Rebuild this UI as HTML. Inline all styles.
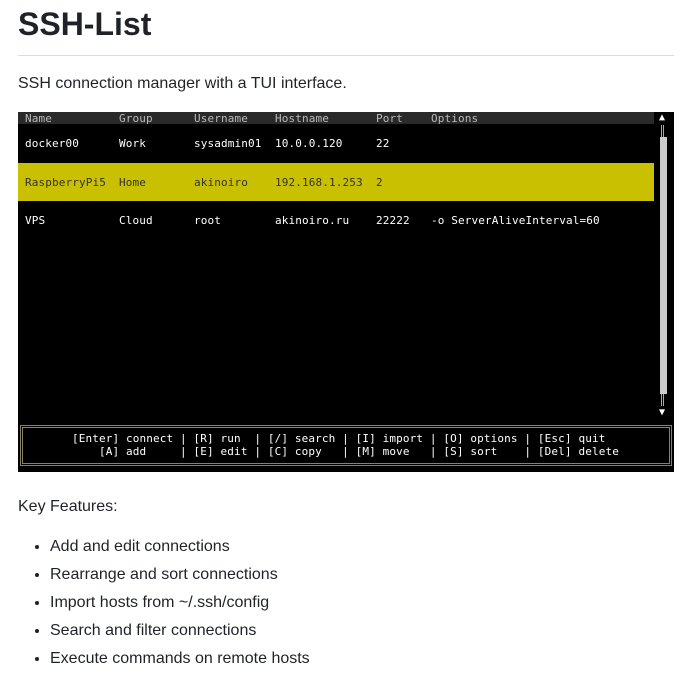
<!DOCTYPE html>
<html><head><style>
body{margin:0;background:#fff;font-family:"Liberation Sans",sans-serif;color:#1f2328;}
h1{position:absolute;left:18px;top:6px;margin:0;font-size:32px;font-weight:bold;}
.hr{position:absolute;left:18px;top:55px;width:656px;height:1px;background:#d8dee4;}
.p{position:absolute;left:18px;font-size:16px;}
.term{position:absolute;left:18px;top:112px;width:656px;height:360px;background:#000;font-family:"DejaVu Sans Mono",monospace;font-size:11px;}
.t{position:absolute;white-space:pre;color:#fff;letter-spacing:0.13px;}
.h{color:#bbb;top:0px}
.r1{top:25px}.r2{top:64px;color:#333}.r3{top:102px}
ul{position:absolute;left:18px;top:533px;margin:0;padding-left:32px;font-size:16px;}
li{height:28px;line-height:28px;}
</style></head><body>
<h1>SSH-List</h1>
<div class="hr"></div>
<div class="p" style="top:75px">SSH connection manager with a TUI interface.</div>
<div class="term">
 <div style="position:absolute;left:0;top:0;width:636px;height:12px;background:#2a2a2a"></div>
 <div style="position:absolute;left:0;top:51px;width:636px;height:38px;background:#c8c000"></div>
 <div class="t h" style="left:7px">Name</div><div class="t h" style="left:101px">Group</div><div class="t h" style="left:176px">Username</div><div class="t h" style="left:257px">Hostname</div><div class="t h" style="left:358px">Port</div><div class="t h" style="left:413px">Options</div>
 <div class="t r1" style="left:7px">docker00</div><div class="t r1" style="left:101px">Work</div><div class="t r1" style="left:176px">sysadmin01</div><div class="t r1" style="left:257px">10.0.0.120</div><div class="t r1" style="left:358px">22</div>
 <div class="t r2" style="left:7px">RaspberryPi5</div><div class="t r2" style="left:101px">Home</div><div class="t r2" style="left:176px">akinoiro</div><div class="t r2" style="left:257px">192.168.1.253</div><div class="t r2" style="left:358px">2</div>
 <div class="t r3" style="left:7px">VPS</div><div class="t r3" style="left:101px">Cloud</div><div class="t r3" style="left:176px">root</div><div class="t r3" style="left:257px">akinoiro.ru</div><div class="t r3" style="left:358px">22222</div><div class="t r3" style="left:413px">-o ServerAliveInterval=60</div>
 <div class="t" style="left:641px;top:0px;font-size:10px">▲</div>
 <div style="position:absolute;left:643px;top:13px;width:3px;height:12px;border-left:1px solid #aaa;border-right:1px solid #aaa;box-sizing:border-box"></div>
 <div style="position:absolute;left:642px;top:25px;width:7px;height:257px;background:#ccc"></div>
 <div style="position:absolute;left:643px;top:282px;width:3px;height:12px;border-left:1px solid #aaa;border-right:1px solid #aaa;box-sizing:border-box"></div>
 <div class="t" style="left:641px;top:295px;font-size:10px">▼</div>
 <div style="position:absolute;left:2px;top:313px;width:652px;height:41px;border:3px double #8a8060;box-sizing:border-box"></div>
 <div class="t" style="left:54px;top:320px">[Enter] connect | [R] run  | [/] search | [I] import | [O] options | [Esc] quit
    [A] add     | [E] edit | [C] copy   | [M] move   | [S] sort    | [Del] delete</div>
</div>
<div class="p" style="top:498px">Key Features:</div>
<ul>
<li>Add and edit connections</li>
<li>Rearrange and sort connections</li>
<li>Import hosts from ~/.ssh/config</li>
<li>Search and filter connections</li>
<li>Execute commands on remote hosts</li>
</ul>
</body></html>
